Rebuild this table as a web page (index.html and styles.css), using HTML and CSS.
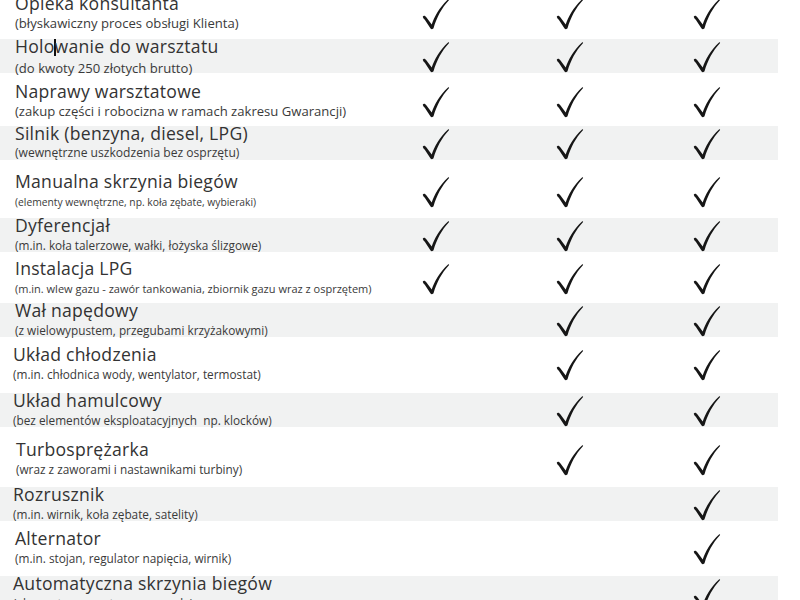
FILE: index.html
```html
<!DOCTYPE html>
<html lang="pl">
<head>
<meta charset="utf-8">
<title>Zakres ochrony</title>
<link rel="stylesheet" href="styles.css">
</head>
<body>
<svg class="defs" width="0" height="0" aria-hidden="true">
  <defs>
    <symbol id="chk" viewBox="0 0 28 32">
      <path d="M0.3 18.2 C1.2 16.8 2.8 17.2 4.2 19 L9.6 26.2 C12 19 17.5 8.5 26.4 0.4 C27.2 -0.2 27.9 0.6 27.3 1.3 C20 9 14.5 19.5 11.6 29.8 C11 31.6 9 31.8 8.2 30.2 L2.6 21.6 C1.8 20.6 0.8 20 0.3 18.2 Z"/>
    </symbol>
  </defs>
</svg>
<div class="table">
  <div class="row">
    <div class="desc"><div class="title">Opieka konsultanta</div><div class="sub sub-xl">(błyskawiczny proces obsługi Klienta)</div></div>
    <div class="cell"><svg class="check"><use href="#chk"/></svg></div>
    <div class="cell"><svg class="check"><use href="#chk"/></svg></div>
    <div class="cell"><svg class="check"><use href="#chk"/></svg></div>
  </div>
  <div class="row shaded">
    <div class="desc"><div class="title">Holo<span class="caret"></span>wanie do warsztatu</div><div class="sub sub-xl">(do kwoty 250 złotych brutto)</div></div>
    <div class="cell"><svg class="check"><use href="#chk"/></svg></div>
    <div class="cell"><svg class="check"><use href="#chk"/></svg></div>
    <div class="cell"><svg class="check"><use href="#chk"/></svg></div>
  </div>
  <div class="row">
    <div class="desc"><div class="title">Naprawy warsztatowe</div><div class="sub sub-xl">(zakup części i robocizna w ramach zakresu Gwarancji)</div></div>
    <div class="cell"><svg class="check"><use href="#chk"/></svg></div>
    <div class="cell"><svg class="check"><use href="#chk"/></svg></div>
    <div class="cell"><svg class="check"><use href="#chk"/></svg></div>
  </div>
  <div class="row shaded">
    <div class="desc"><div class="title">Silnik (benzyna, diesel, LPG)</div><div class="sub sub-l">(wewnętrzne uszkodzenia bez osprzętu)</div></div>
    <div class="cell"><svg class="check"><use href="#chk"/></svg></div>
    <div class="cell"><svg class="check"><use href="#chk"/></svg></div>
    <div class="cell"><svg class="check"><use href="#chk"/></svg></div>
  </div>
  <div class="row">
    <div class="desc"><div class="title">Manualna skrzynia biegów</div><div class="sub sub-s">(elementy wewnętrzne, np. koła zębate, wybieraki)</div></div>
    <div class="cell"><svg class="check"><use href="#chk"/></svg></div>
    <div class="cell"><svg class="check"><use href="#chk"/></svg></div>
    <div class="cell"><svg class="check"><use href="#chk"/></svg></div>
  </div>
  <div class="row shaded">
    <div class="desc"><div class="title">Dyferencjał</div><div class="sub sub-m">(m.in. koła talerzowe, wałki, łożyska ślizgowe)</div></div>
    <div class="cell"><svg class="check"><use href="#chk"/></svg></div>
    <div class="cell"><svg class="check"><use href="#chk"/></svg></div>
    <div class="cell"><svg class="check"><use href="#chk"/></svg></div>
  </div>
  <div class="row">
    <div class="desc"><div class="title">Instalacja LPG</div><div class="sub">(m.in. wlew gazu - zawór tankowania, zbiornik gazu wraz z osprzętem)</div></div>
    <div class="cell"><svg class="check"><use href="#chk"/></svg></div>
    <div class="cell"><svg class="check"><use href="#chk"/></svg></div>
    <div class="cell"><svg class="check"><use href="#chk"/></svg></div>
  </div>
  <div class="row shaded">
    <div class="desc"><div class="title">Wał napędowy</div><div class="sub sub-m">(z wielowypustem, przegubami krzyżakowymi)</div></div>
    <div class="cell"></div>
    <div class="cell"><svg class="check"><use href="#chk"/></svg></div>
    <div class="cell"><svg class="check"><use href="#chk"/></svg></div>
  </div>
  <div class="row">
    <div class="desc desc-tight"><div class="title">Układ chłodzenia</div><div class="sub sub-m">(m.in. chłodnica wody, wentylator, termostat)</div></div>
    <div class="cell"></div>
    <div class="cell"><svg class="check"><use href="#chk"/></svg></div>
    <div class="cell"><svg class="check"><use href="#chk"/></svg></div>
  </div>
  <div class="row shaded">
    <div class="desc desc-tight"><div class="title">Układ hamulcowy</div><div class="sub sub-m">(bez elementów eksploatacyjnych&nbsp; np. klocków)</div></div>
    <div class="cell"></div>
    <div class="cell"><svg class="check"><use href="#chk"/></svg></div>
    <div class="cell"><svg class="check"><use href="#chk"/></svg></div>
  </div>
  <div class="row">
    <div class="desc desc-wide"><div class="title">Turbosprężarka</div><div class="sub sub-m">(wraz z zaworami i nastawnikami turbiny)</div></div>
    <div class="cell"></div>
    <div class="cell"><svg class="check"><use href="#chk"/></svg></div>
    <div class="cell"><svg class="check"><use href="#chk"/></svg></div>
  </div>
  <div class="row shaded">
    <div class="desc desc-tight"><div class="title">Rozrusznik</div><div class="sub sub-m">(m.in. wirnik, koła zębate, satelity)</div></div>
    <div class="cell"></div>
    <div class="cell"></div>
    <div class="cell"><svg class="check"><use href="#chk"/></svg></div>
  </div>
  <div class="row">
    <div class="desc"><div class="title">Alternator</div><div class="sub sub-m">(m.in. stojan, regulator napięcia, wirnik)</div></div>
    <div class="cell"></div>
    <div class="cell"></div>
    <div class="cell"><svg class="check"><use href="#chk"/></svg></div>
  </div>
  <div class="row shaded">
    <div class="desc desc-tight"><div class="title">Automatyczna skrzynia biegów</div><div class="sub sub-m">(elementy wewnętrzne, sprzęgła)</div></div>
    <div class="cell"></div>
    <div class="cell"></div>
    <div class="cell"><svg class="check"><use href="#chk"/></svg></div>
  </div>
</div>
</body>
</html>
```
FILE: styles.css
```css
html, body {
  margin: 0;
  padding: 0;
  background: #ffffff;
}
body {
  font-family: "Open Sans", "Liberation Sans", sans-serif;
  color: #333333;
  overflow: hidden;
}
.defs {
  position: absolute;
  width: 0;
  height: 0;
}
.table {
  width: 778px;
  margin-top: -4px;
  display: grid;
  grid-template-rows: 43.3px 45px 41.7px 48px 43.7px 43.3px 42px 43.7px 46.3px 48.7px 45px 44.3px 45px 45px;
}
.row {
  display: grid;
  grid-template-columns: 370px 132px 136px 137px;
  align-items: start;
}
.row.shaded {
  background: linear-gradient(#f1f2f2, #f1f2f2) top left / 100% 34px no-repeat;
}
.desc {
  padding-left: 15px;
  white-space: nowrap;
}
.desc-tight {
  padding-left: 13px;
}
.desc-wide {
  padding-left: 16px;
}
.title {
  font-size: 17.6px;
  letter-spacing: 0.25px;
  line-height: 15px;
  color: #333333;
}
.sub {
  font-size: 11px;
  line-height: 14px;
  padding-top: 6px;
  color: #3a3a3a;
}
.sub-xl {
  font-size: 13.1px;
  padding-top: 5px;
}
.sub-l {
  font-size: 12.1px;
  padding-top: 5.5px;
}
.sub-m {
  font-size: 11.8px;
  padding-top: 5.5px;
}
.sub-s {
  font-size: 10.3px;
}
.caret {
  display: inline-block;
  width: 2px;
  height: 17px;
  background: #111;
  margin: 0 -1px;
  vertical-align: -3px;
}
.cell {
  display: flex;
  justify-content: center;
  padding-top: 3px;
}
.check {
  width: 28px;
  height: 31px;
  fill: #161616;
}
```
